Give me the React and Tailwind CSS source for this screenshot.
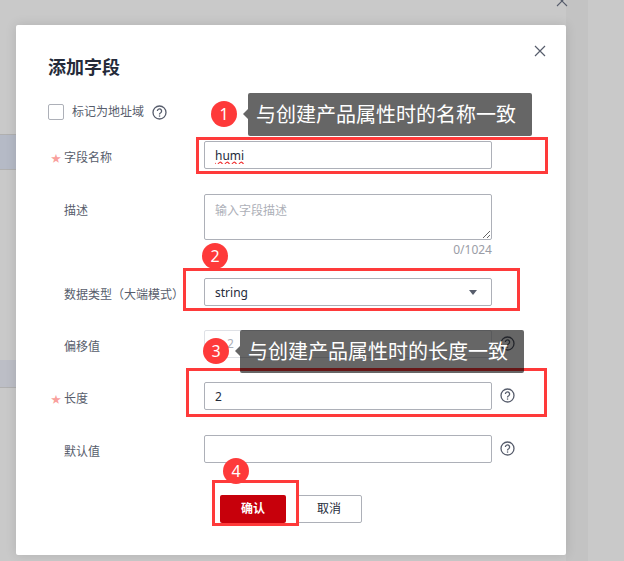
import React from 'react';

const HelpIcon = ({ className }) => (
    <svg className={className} width="15" height="15" viewBox="0 0 15 15" fill="none">
        <circle cx="7.5" cy="7.5" r="6.5" stroke="#575d6c" strokeWidth="1.3" />
        <path d="M5.4 6a2.1 2.1 0 1 1 3.3 1.7c-.8.5-1.2.9-1.2 1.7" stroke="#575d6c" strokeWidth="1.3" fill="none" />
        <rect x="6.9" y="10.4" width="1.3" height="1.3" fill="#575d6c" />
    </svg>
);

const Row = ({ label, required, className, children, help }) => (
    <div className={`flex ${className}`}>
        <div className="flex h-7 w-[156px] flex-none text-xs leading-[34px] text-[#575d6c]">
            <span className="w-4 flex-none text-center text-[10px] text-[#f9a09c]">{required ? '★' : ''}</span>
            {label}
        </div>
        {children}
        {help && <HelpIcon className="ml-2 mt-[6px] flex-none" />}
    </div>
);

const Marker = ({ n, className }) => (
    <div className={`absolute flex h-[26px] w-[26px] items-center justify-center rounded-full bg-[#fe3a3a] text-base text-white ${className}`}>
        {n}
    </div>
);

const Note = ({ text, className }) => (
    <div className={`absolute flex h-[43px] w-[284px] items-center rounded-[2px] bg-black/60 pl-2 text-[20px] text-white ${className}`}>
        <span className="absolute left-[-5px] top-[16px] h-0 w-0 border-y-[5px] border-r-[5px] border-y-transparent border-r-black/60" />
        {text}
    </div>
);

const inputCls = 'h-7 w-[288px] flex-none rounded-[2px] border border-[#adb0b8] bg-white px-[10px] text-xs text-[#252b3a] outline-none';

export default function App() {
    return (
        <div className="relative h-[561px] w-[624px] overflow-hidden bg-[#c9c9c9] pl-4 pt-[25px] font-['Noto_Sans','Noto_Sans_CJK_SC',sans-serif]">
            {/* page behind the mask */}
            <div className="absolute left-0 top-[134px] h-[36px] w-4 border-y border-[#b0b0b0] bg-[#b5bac6]" />
            <div className="absolute left-0 top-[360px] h-[28px] w-4 border-b border-[#b0b0b0] bg-[#bcbec6]" />
            <div className="absolute left-[566px] top-0 h-full w-[22px] bg-[#c3c3c3]" />
            <svg className="absolute left-[556px] top-[-5px]" width="12" height="12" viewBox="0 0 12 12">
                <path d="M1 1l10 10M11 1L1 11" stroke="#575d6c" strokeWidth="1.1" />
            </svg>

            <div className="relative h-[530px] w-[550px] rounded-[2px] bg-white px-8 pt-8 shadow-[0_0_12px_rgba(0,0,0,0.12)]">
                <svg className="absolute right-[20px] top-[20px]" width="12" height="12" viewBox="0 0 12 12">
                    <path d="M1 1l10 10M11 1L1 11" stroke="#575d6c" strokeWidth="1.2" />
                </svg>
                <h2 className="text-lg font-bold leading-5 text-[#252b3a]">添加字段</h2>

                <div className="mt-[25px] flex h-5 items-center">
                    <span className="h-4 w-4 rounded-[2px] border border-[#adb0b8] bg-white" />
                    <span className="ml-2 text-xs text-[#575d6c]">标记为地址域</span>
                    <HelpIcon className="ml-2" />
                </div>

                <Row label="字段名称" required className="mt-[19px]">
                    <input
                        readOnly
                        spellCheck="false"
                        value="humi"
                        className={`${inputCls} border-[#5e7ce0] underline decoration-[#f03030] decoration-wavy`}
                    />
                </Row>

                <Row label="描述" className="mt-[25px]">
                    <div className="w-[288px] flex-none">
                        <textarea
                            readOnly
                            placeholder="输入字段描述"
                            className="block h-[46px] w-full rounded-[2px] border border-[#adb0b8] bg-white px-[10px] py-2 text-xs text-[#252b3a] outline-none placeholder:text-[#adb0b8]"
                        />
                        <div className="mt-[2px] text-right text-xs leading-4 text-[#9a9da6]">0/1024</div>
                    </div>
                </Row>

                <Row label="数据类型（大端模式）" className="mt-[20px]">
                    <div className={`${inputCls} flex items-center justify-between pr-[14px] pt-px`}>
                        <span>string</span>
                        <span className="h-0 w-0 border-x-[4px] border-t-[5px] border-x-transparent border-t-[#575d6c]" />
                    </div>
                </Row>

                <Row label="偏移值" help className="mt-[24px]">
                    <div className={`${inputCls} border-[#dfe1e6] bg-[#f5f5f6] pl-[22px] leading-[26px] text-[#adb0b8]`}>2</div>
                </Row>

                <Row label="长度" required help className="mt-[24px]">
                    <input readOnly value="2" className={inputCls} />
                </Row>

                <Row label="默认值" help className="mt-[25px]">
                    <input readOnly value="" className={inputCls} />
                </Row>

                <div className="mt-[32px] flex gap-[10px] pl-[172px]">
                    <button className="h-7 w-[66px] rounded-[2px] bg-[#c7000b] text-xs font-bold text-white">确认</button>
                    <button className="h-7 w-[66px] rounded-[2px] border border-[#adb0b8] bg-white text-xs text-[#252b3a]">取消</button>
                </div>
            </div>

            {/* annotations on top of the dialog */}
            <div className="absolute left-[196px] top-[137px] h-[37px] w-[352px] border-[3px] border-[#fe3a3a]" />
            <div className="absolute left-[183px] top-[268px] h-[43px] w-[337px] border-[3px] border-[#fe3a3a]" />
            <div className="absolute left-[186px] top-[368px] h-[49px] w-[361px] border-[3px] border-[#fe3a3a]" />
            <div className="absolute left-[212px] top-[480px] h-[46px] w-[87px] border-[3px] border-[#fe3a3a]" />
            <Marker n="1" className="left-[211px] top-[101px]" />
            <Marker n="2" className="left-[202px] top-[243px]" />
            <Marker n="3" className="left-[203px] top-[338px]" />
            <Marker n="4" className="left-[223px] top-[458px]" />
            <Note text="与创建产品属性时的名称一致" className="left-[248px] top-[93px]" />
            <Note text="与创建产品属性时的长度一致" className="left-[240px] top-[330px]" />
        </div>
    );
}
